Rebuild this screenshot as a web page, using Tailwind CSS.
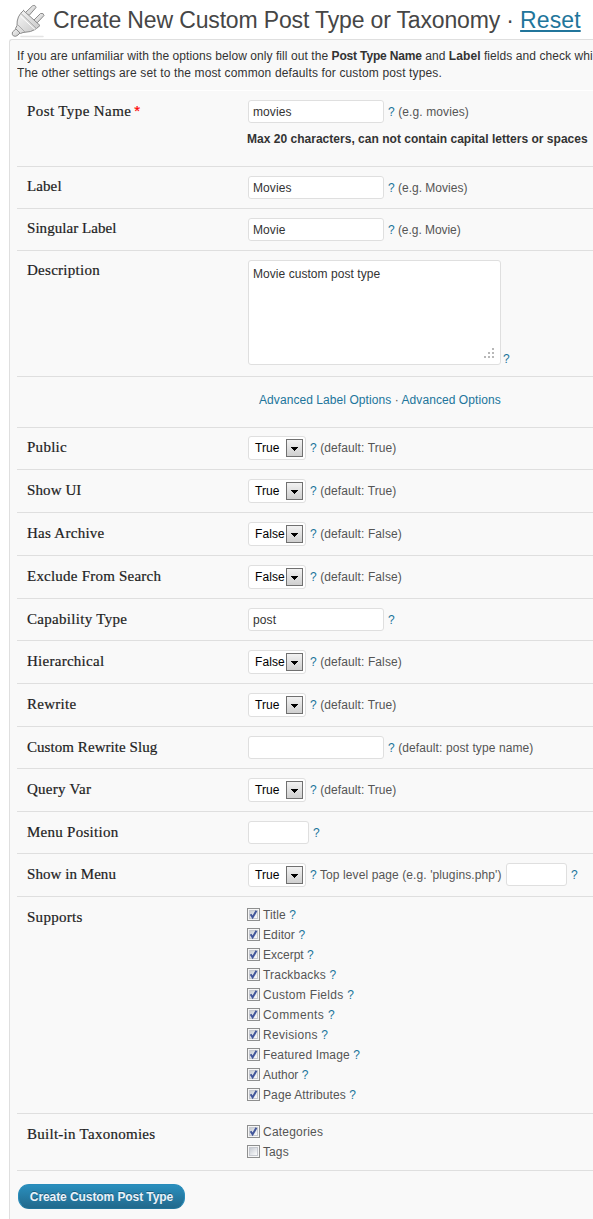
<!DOCTYPE html>
<html lang="en">
<head>
<meta charset="utf-8">
<title>Create New Custom Post Type</title>
<script src="https://cdn.jsdelivr.net/npm/@tailwindcss/browser@4"></script>
</head>
<body class="h-[1219px] w-[593px] overflow-hidden bg-white font-['Liberation_Sans',Arial,sans-serif] text-[12px] leading-5 tracking-[0.1px] text-[#555]">

<svg width="0" height="0" class="absolute">
  <defs>
    <linearGradient id="box" x1="0" y1="0" x2="1" y2="1"><stop offset="0" stop-color="#c3c8d0"/><stop offset="1" stop-color="#fff"/></linearGradient>
    <linearGradient id="metal" x1="0" y1="0" x2="1" y2="1"><stop offset="0" stop-color="#fafafa"/><stop offset="1" stop-color="#c4c4c4"/></linearGradient>
    <symbol id="unchecked" viewBox="0 0 13 13">
      <rect x=".5" y=".5" width="12" height="12" fill="#f6f6f6" stroke="#8e8f8f"/>
      <rect x="2.5" y="2.5" width="8" height="8" fill="url(#box)" stroke="#c6c9d0"/>
    </symbol>
    <symbol id="checked" viewBox="0 0 13 13">
      <use href="#unchecked"/>
      <path d="M3.6 6.2 5.6 9.4 9.4 2.8" fill="none" stroke="#42569a" stroke-width="2"/>
    </symbol>
    <symbol id="arrow" viewBox="0 0 7 4"><path d="M0 0h7v1H6v1H5v1H4v1H3V3H2V2H1V1H0z" fill="#000"/></symbol>
  </defs>
</svg>

<header class="flex h-[39px] pl-[11px]">
  <svg class="mt-[4px] h-[34px] w-[34px] shrink-0" viewBox="0 0 34 34" stroke-linejoin="round" stroke-linecap="round">
    <path d="M10 32.5H32" stroke="#e4e4e4" stroke-width="1.5"/>
    <g stroke="#8b8b8b" fill="url(#metal)">
      <path d="M6 24 1.500 28Q.5 30.500 2.500 32 5 33 7 31L10 28z"/>
      <path d="M14 9 21.500 1.800Q24.500 .600 25 3.500L18.500 11z"/>
      <path d="M22 17 29.500 9.500Q32.500 8.500 33 11.500L26.500 18.500z"/>
      <path d="M12.500 6.500 29 21.500Q25 26 19.500 27.500L12 28.500 9.500 29.500 4.500 24.500 6 21.500Q5.500 12 12.500 6.500z"/>
      <path d="M10 9.500 25.500 24.500M6.500 20.500 14 28" fill="none" stroke="#aaa"/>
      <path d="M10 12.500 24 25.500" fill="none" stroke="#fff"/>
    </g>
  </svg>
  <h1 class="mt-[6px] ml-[8px] whitespace-nowrap text-[23px] leading-[29px] tracking-[-0.15px] text-[#464646]">Create New Custom Post Type or Taxonomy · <a class="tracking-[0.1px] text-[#21759b] underline decoration-2 underline-offset-[2px]">Reset</a></h1>
</header>

<main class="ml-[9px] h-[1180px] overflow-hidden rounded-tl-[3px] border-t border-l border-[#dfdfdf] bg-[#f9f9f9] pl-[7px]">
  <div class="h-[51px] overflow-hidden border-b border-white pt-[8px] leading-[17px] whitespace-nowrap text-[#333]">
    <p class="tracking-[0.07px]">If you are unfamiliar with the options below only fill out the <b class="tracking-[-0.16px]">Post Type Name</b> and <b>Label</b> fields and check whi</p>
    <p class="tracking-[0.14px]">The other settings are set to the most common defaults for custom post types.</p>
  </div>

  <form class="whitespace-nowrap [&_label]:w-[229px] [&_label]:shrink-0 [&_label]:pt-[10px] [&_label]:pl-[10px] [&_label]:font-['Liberation_Serif',serif] [&_label]:text-[15px] [&_label]:tracking-[0.27px] [&_label]:text-[#222] [&_label]:[-webkit-text-stroke:0.2px_#222] [&_i]:not-italic [&_i]:text-[#21759b] [&_input]:h-[23px] [&_input]:rounded-[3px] [&_input]:border [&_input]:border-[#dfdfdf] [&_input]:bg-white [&_input]:px-[4px] [&_input]:text-[#333] [&>div]:border-b [&>div]:border-[#dfdfdf]">
    <div class="flex h-[76px]">
      <label class="tracking-[0.4px]!">Post Type Name<span class="ml-[3px] font-['Liberation_Sans',sans-serif] text-[15px] leading-none text-[#f00] [-webkit-text-stroke:0.2px_#f00]">*</span></label>
      <div class="pt-[9px] pl-px">
        <div class="ml-px flex gap-[4px]"><input class="w-[136px]" value="movies"><span class="pt-[2px]"><i>?</i> (e.g. movies)</span></div>
        <b class="mt-[6px] block tracking-[0.02px] text-[#333]">Max 20 characters, can not contain capital letters or spaces</b>
      </div>
    </div>
    <div class="flex h-[42px]">
      <label class="pt-[9px]! tracking-[0.1px]!">Label</label>
      <div class="mt-[9px] ml-[2px] flex gap-[4px]"><input class="w-[136px]" value="Movies"><span class="pt-[2px] tracking-normal"><i>?</i> (e.g. Movies)</span></div>
    </div>
    <div class="flex h-[42px]">
      <label class="pt-[9px]! tracking-[0.05px]!">Singular Label</label>
      <div class="mt-[9px] ml-[2px] flex gap-[4px]"><input class="w-[136px]" value="Movie"><span class="pt-[2px] tracking-[-0.05px]"><i>?</i> (e.g. Movie)</span></div>
    </div>
    <div class="flex h-[126px]">
      <label class="pt-[9px]!">Description</label>
      <div class="mt-[9px] ml-[2px] flex h-[105px] items-end gap-[2px]">
        <div class="flex h-full w-[253px] flex-col justify-between rounded-[3px] border border-[#dfdfdf] bg-white pt-[3px] pl-[4px] text-[#333]">
          <span class="tracking-[0.05px]">Movie custom post type</span>
          <svg class="mr-[6px] mb-[6px] self-end" width="10" height="10" viewBox="0 0 10 10" fill="#b8b8b8" shape-rendering="crispEdges"><path d="M8 0h2v2H8zM8 4h2v2H8zM8 8h2v2H8zM4 4h2v2H4zM4 8h2v2H4zM0 8h2v2H0z"/></svg>
        </div>
        <i class="-mb-[4px]">?</i>
      </div>
    </div>
    <div class="h-[51px] pt-[13px] pl-[242px] tracking-[0.07px] text-[#555]"><i>Advanced Label Options</i> · <i>Advanced Options</i></div>

    <div class="flex h-[42px]">
      <label class="pt-[9px]!">Public</label>
      <div class="mt-[8px] ml-[2px] flex h-[24px] w-[58px] items-center justify-between rounded-[3px] border border-[#dfdfdf] bg-white pr-[2px] pl-[6px] text-black"><span class="w-[30px]">True</span><span class="flex h-[18px] w-[17px] shrink-0 items-center justify-center border border-[#707070] bg-linear-to-b from-[#f2f2f2] to-[#cfcfcf]"><svg class="mt-[2px] h-[4px] w-[7px]"><use href="#arrow"/></svg></span></div>
      <span class="ml-[4px] pt-[10px]"><i>?</i> (default: True)</span>
    </div>
    <div class="flex h-[43px]">
      <label class="tracking-[0.1px]!">Show UI</label>
      <div class="mt-[9px] ml-[2px] flex h-[24px] w-[58px] items-center justify-between rounded-[3px] border border-[#dfdfdf] bg-white pr-[2px] pl-[6px] text-black"><span class="w-[30px]">True</span><span class="flex h-[18px] w-[17px] shrink-0 items-center justify-center border border-[#707070] bg-linear-to-b from-[#f2f2f2] to-[#cfcfcf]"><svg class="mt-[2px] h-[4px] w-[7px]"><use href="#arrow"/></svg></span></div>
      <span class="ml-[4px] pt-[11px]"><i>?</i> (default: True)</span>
    </div>
    <div class="flex h-[43px]">
      <label>Has Archive</label>
      <div class="mt-[9px] ml-[2px] flex h-[24px] w-[58px] items-center justify-between rounded-[3px] border border-[#dfdfdf] bg-white pr-[2px] pl-[6px] text-black"><span class="w-[30px]">False</span><span class="flex h-[18px] w-[17px] shrink-0 items-center justify-center border border-[#707070] bg-linear-to-b from-[#f2f2f2] to-[#cfcfcf]"><svg class="mt-[2px] h-[4px] w-[7px]"><use href="#arrow"/></svg></span></div>
      <span class="ml-[4px] pt-[11px]"><i>?</i> (default: False)</span>
    </div>
    <div class="flex h-[43px]">
      <label class="tracking-[0.22px]!">Exclude From Search</label>
      <div class="mt-[9px] ml-[2px] flex h-[24px] w-[58px] items-center justify-between rounded-[3px] border border-[#dfdfdf] bg-white pr-[2px] pl-[6px] text-black"><span class="w-[30px]">False</span><span class="flex h-[18px] w-[17px] shrink-0 items-center justify-center border border-[#707070] bg-linear-to-b from-[#f2f2f2] to-[#cfcfcf]"><svg class="mt-[2px] h-[4px] w-[7px]"><use href="#arrow"/></svg></span></div>
      <span class="ml-[4px] pt-[11px]"><i>?</i> (default: False)</span>
    </div>
    <div class="flex h-[42px]">
      <label class="tracking-[0.3px]!">Capability Type</label>
      <div class="mt-[9px] ml-[2px] flex gap-[4px]"><input class="w-[136px]" value="post"><span class="pt-[2px]"><i>?</i></span></div>
    </div>
    <div class="flex h-[43px]">
      <label>Hierarchical</label>
      <div class="mt-[9px] ml-[2px] flex h-[24px] w-[58px] items-center justify-between rounded-[3px] border border-[#dfdfdf] bg-white pr-[2px] pl-[6px] text-black"><span class="w-[30px]">False</span><span class="flex h-[18px] w-[17px] shrink-0 items-center justify-center border border-[#707070] bg-linear-to-b from-[#f2f2f2] to-[#cfcfcf]"><svg class="mt-[2px] h-[4px] w-[7px]"><use href="#arrow"/></svg></span></div>
      <span class="ml-[4px] pt-[11px]"><i>?</i> (default: False)</span>
    </div>
    <div class="flex h-[43px]">
      <label>Rewrite</label>
      <div class="mt-[9px] ml-[2px] flex h-[24px] w-[58px] items-center justify-between rounded-[3px] border border-[#dfdfdf] bg-white pr-[2px] pl-[6px] text-black"><span class="w-[30px]">True</span><span class="flex h-[18px] w-[17px] shrink-0 items-center justify-center border border-[#707070] bg-linear-to-b from-[#f2f2f2] to-[#cfcfcf]"><svg class="mt-[2px] h-[4px] w-[7px]"><use href="#arrow"/></svg></span></div>
      <span class="ml-[4px] pt-[11px]"><i>?</i> (default: True)</span>
    </div>
    <div class="flex h-[42px]">
      <label class="tracking-[0.06px]!">Custom Rewrite Slug</label>
      <div class="mt-[9px] ml-[2px] flex gap-[4px]"><input class="w-[136px]" value=""><span class="pt-[2px]"><i>?</i> (default: post type name)</span></div>
    </div>
    <div class="flex h-[43px]">
      <label>Query Var</label>
      <div class="mt-[9px] ml-[2px] flex h-[24px] w-[58px] items-center justify-between rounded-[3px] border border-[#dfdfdf] bg-white pr-[2px] pl-[6px] text-black"><span class="w-[30px]">True</span><span class="flex h-[18px] w-[17px] shrink-0 items-center justify-center border border-[#707070] bg-linear-to-b from-[#f2f2f2] to-[#cfcfcf]"><svg class="mt-[2px] h-[4px] w-[7px]"><use href="#arrow"/></svg></span></div>
      <span class="ml-[4px] pt-[11px]"><i>?</i> (default: True)</span>
    </div>
    <div class="flex h-[42px]">
      <label>Menu Position</label>
      <div class="mt-[9px] ml-[2px] flex gap-[4px]"><input class="w-[61px]" value=""><span class="pt-[2px]"><i>?</i></span></div>
    </div>
    <div class="flex h-[43px]">
      <label class="tracking-[0.05px]!">Show in Menu</label>
      <div class="mt-[9px] ml-[2px] flex h-[24px] w-[58px] items-center justify-between rounded-[3px] border border-[#dfdfdf] bg-white pr-[2px] pl-[6px] text-black"><span class="w-[30px]">True</span><span class="flex h-[18px] w-[17px] shrink-0 items-center justify-center border border-[#707070] bg-linear-to-b from-[#f2f2f2] to-[#cfcfcf]"><svg class="mt-[2px] h-[4px] w-[7px]"><use href="#arrow"/></svg></span></div>
      <span class="ml-[4px] w-[196px] pt-[11px]"><i>?</i> Top level page (e.g. 'plugins.php')</span>
      <input class="mt-[9px] w-[61px]" value=""><span class="ml-[4px] pt-[11px]"><i>?</i></span>
    </div>
    <div class="flex h-[217px]">
      <label>Supports</label>
      <ul class="pt-[8px] pl-px [&>li]:flex [&>li]:h-5 [&>li]:gap-[3px] [&_svg]:mt-[3px] [&_svg]:h-[13px] [&_svg]:w-[13px]">
        <li><svg><use href="#checked"/></svg><span>Title <i>?</i></span></li>
        <li><svg><use href="#checked"/></svg><span>Editor <i>?</i></span></li>
        <li><svg><use href="#checked"/></svg><span class="tracking-normal">Excerpt <i>?</i></span></li>
        <li><svg><use href="#checked"/></svg><span class="tracking-[0.2px]">Trackbacks <i>?</i></span></li>
        <li><svg><use href="#checked"/></svg><span class="tracking-[0.3px]">Custom Fields <i>?</i></span></li>
        <li><svg><use href="#checked"/></svg><span class="tracking-[0.4px]">Comments <i>?</i></span></li>
        <li><svg><use href="#checked"/></svg><span class="tracking-[0.3px]">Revisions <i>?</i></span></li>
        <li><svg><use href="#checked"/></svg><span class="tracking-[0.15px]">Featured Image <i>?</i></span></li>
        <li><svg><use href="#checked"/></svg><span class="tracking-normal">Author <i>?</i></span></li>
        <li><svg><use href="#checked"/></svg><span>Page Attributes <i>?</i></span></li>
      </ul>
    </div>
    <div class="flex h-[57px]">
      <label>Built-in Taxonomies</label>
      <ul class="pt-[8px] pl-px [&>li]:flex [&>li]:h-5 [&>li]:gap-[3px] [&_svg]:mt-[3px] [&_svg]:h-[13px] [&_svg]:w-[13px]">
        <li><svg><use href="#checked"/></svg><span class="tracking-[0.22px]">Categories</span></li>
        <li><svg><use href="#unchecked"/></svg><span>Tags</span></li>
      </ul>
    </div>
    <button type="button" class="mt-[13px] ml-px flex h-[25px] w-[167px] items-center justify-center rounded-[11px] border border-[#298cba] border-b-[#21759b] bg-linear-to-b from-[#2a8fbe] to-[#21698c] font-bold tracking-[-0.08px] text-[#eaf2fa] text-shadow-[0_-1px_0_rgb(0_0_0/0.3)]">Create Custom Post Type</button>
  </form>
</main>
</body>
</html>
